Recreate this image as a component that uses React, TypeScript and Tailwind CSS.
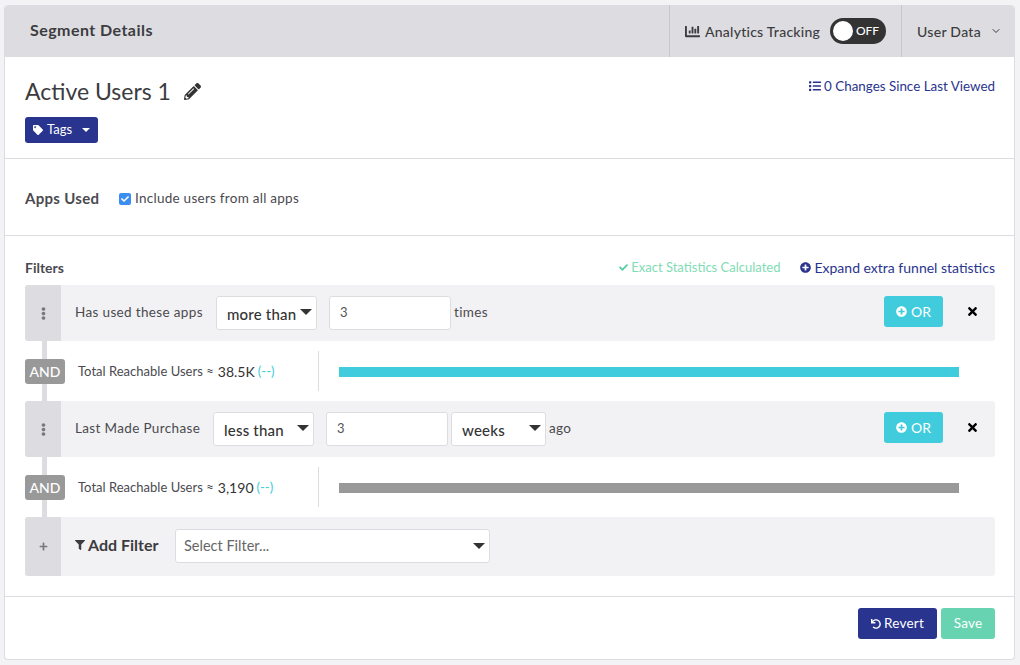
import { FC, ReactNode } from 'react';
import { ChevronDown } from 'lucide-react';
import {
  FaChartBar,
  FaCheck,
  FaEllipsisV,
  FaFilter,
  FaList,
  FaPencilAlt,
  FaPlus,
  FaPlusCircle,
  FaTag,
  FaTimes,
  FaUndo,
} from 'react-icons/fa';

const Caret: FC = () => (
  <span className="block w-0 h-0 border-x-[6px] border-x-transparent border-t-[6px] border-t-[#333]" />
);

const SelectBox: FC<{ label: string; width: string }> = ({ label, width }) => (
  <div
    className={`${width} h-[34px] shrink-0 flex items-center justify-between pl-[10px] pr-[3px] bg-white border border-[#dddde1] rounded-[3px]`}
  >
    <span className="text-[15px] leading-none font-medium text-[#333] pt-[3px] tracking-[0.2px]">{label}</span>
    <span className="mb-[3px] mr-[1px]"><Caret /></span>
  </div>
);

const NumberBox: FC<{ width: string }> = ({ width }) => (
  <div className={`${width} h-[34px] shrink-0 flex items-center pl-[10px] bg-white border border-[#dddde1] rounded-[3px] text-[13px] text-[#555]`}>
    3
  </div>
);

const FilterRow: FC<{ children: ReactNode }> = ({ children }) => (
  <div className="h-[56px] flex items-center bg-[#f2f2f4] rounded-[3px] overflow-hidden">
    <div className="w-[36px] h-full shrink-0 flex items-center justify-center bg-[#dddde1] text-[#77777c]">
      <FaEllipsisV size={13} />
    </div>
    <div className="flex-1 flex items-center pl-[14px] text-[13.5px] text-[#4a4a4f] tracking-[0.35px]">{children}</div>
    <button className="w-[59px] h-[31px] mr-[23px] mb-[3px] flex items-center justify-center gap-[4px] bg-[#40ccdc] rounded-[3px] text-[14px] text-white">
      <FaPlusCircle size={11} />
      OR
    </button>
    <FaTimes size={13} className="mr-[16px] mb-[3px] text-black" />
  </div>
);

const ReachRow: FC<{ value: string; barColor: string }> = ({ value, barColor }) => (
  <div className="h-[60px] flex">
    <div className="w-[40px] shrink-0 flex flex-col">
      <div className="flex-1 w-[5px] ml-[17px] bg-[#dddde1]" />
      <div className="h-[25px] flex items-center justify-center bg-[#999] rounded-[3px] text-[14px] font-medium text-white">AND</div>
      <div className="flex-1 w-[5px] ml-[17px] bg-[#dddde1]" />
    </div>
    <div className="w-[253px] shrink-0 flex items-center pl-[13px] pt-[1px] text-[13px] text-[#4a4a4f] tracking-[0.02px]">
      Total Reachable Users ≈ <span className="text-[14px] text-[#333] ml-[4px]">{value}</span>
      <span className="ml-[3px] text-[#40ccdc]">(--)</span>
    </div>
    <div className="my-[10px] w-px bg-[#dddde1]" />
    <div className="flex items-center pl-[20px] pt-[2px]">
      <div className={`w-[620px] h-[10px] ${barColor}`} />
    </div>
  </div>
);

export default function App() {
  return (
    <div className="w-[1020px] h-[665px] pt-[5px] px-[4px] bg-[#f3f3f5] font-['Lato','Liberation_Sans',sans-serif] overflow-hidden">
      <div className="w-[1011px] h-[655px] flex flex-col bg-white border-x border-b border-[#dddde1] rounded-[4px]">
        {/* Header */}
        <div className="h-[52px] shrink-0 flex items-center bg-[#dddde1] rounded-t-[4px]">
          <h2 className="flex-1 pl-[25px] text-[16px] font-bold text-[#3c3c40] tracking-[0.45px] mb-[2px]">Segment Details</h2>
          <div className="h-full w-[232px] flex items-center pl-[15px] border-l border-[#c9c9cd] text-[#3c3c40]">
            <FaChartBar size={15} className="mr-[5px]" />
            <span className="text-[14px] font-medium tracking-[0.25px]">Analytics Tracking</span>
            <div className="w-[56px] h-[26px] ml-[10px] flex items-center justify-between pl-[3px] pr-[7px] rounded-full bg-[#333]">
              <span className="w-[20px] h-[20px] rounded-full bg-white" />
              <span className="text-[12px] font-medium text-white">OFF</span>
            </div>
          </div>
          <div className="h-full w-[113px] flex items-center pl-[15px] border-l border-[#c9c9cd] text-[#3c3c40]">
            <span className="text-[14px] font-medium tracking-[0.3px]">User Data</span>
            <ChevronDown size={12} className="ml-[9px]" />
          </div>
        </div>

        {/* Title */}
        <div className="h-[102px] shrink-0 flex justify-between pl-[20px] pr-[19px] border-b border-[#dddde1]">
          <div>
            <div className="flex items-center mt-[19px] h-[30px]">
              <h1 className="text-[23px] leading-none font-normal text-[#3c3c40]">Active Users 1</h1>
              <FaPencilAlt size={17} className="ml-[13px] text-[#333]" />
            </div>
            <button className="w-[73px] h-[26px] mt-[11px] flex items-center pl-[8px] bg-[#29348e] rounded-[3px] text-[13px] text-white">
              <FaTag size={10} className="mr-[4px]" />
              Tags
              <span className="ml-[10px] w-0 h-0 border-x-[4px] border-x-transparent border-t-[4px] border-t-white" />
            </button>
          </div>
          <div className="flex items-center h-[14px] mt-[22px] text-[13.4px] text-[#29348e]">
            <FaList size={12} className="mr-[3px]" />
            0 Changes Since Last Viewed
          </div>
        </div>

        {/* Apps used */}
        <div className="h-[77px] shrink-0 flex items-center pl-[20px] pt-[3px] border-b border-[#dddde1]">
          <span className="w-[94px] text-[15px] font-bold text-[#4a4a4f] tracking-[0.3px]">Apps Used</span>
          <span className="w-[12px] h-[12px] flex items-center justify-center bg-[#3b8ef0] rounded-[2px] text-white">
            <FaCheck size={8} />
          </span>
          <span className="ml-[4px] text-[13.5px] text-[#4a4a4f] tracking-[0.26px]">Include users from all apps</span>
        </div>

        {/* Filters */}
        <div className="h-[361px] shrink-0 pl-[20px] pr-[19px] border-b border-[#dddde1]">
          <div className="h-[49px] flex items-center justify-between pt-[13px]">
            <span className="text-[14px] font-bold text-[#4a4a4f]">Filters</span>
            <div className="flex items-center text-[14px]">
              <span className="flex items-center pt-[1px] text-[#7fdcb5] mr-[20px] text-[13px]">
                <FaCheck size={9} className="mr-[3px] text-[#55cfa0]" />
                Exact Statistics Calculated
              </span>
              <span className="flex items-center text-[#29348e]">
                <FaPlusCircle size={11} className="mr-[3px]" />
                Expand extra funnel statistics
              </span>
            </div>
          </div>

          <FilterRow>
            <span className="w-[141px] mb-[2px]">Has used these apps</span>
            <SelectBox label="more than" width="w-[101px]" />
            <span className="w-[12px]" />
            <NumberBox width="w-[122px]" />
            <span className="ml-[3px] mb-[2px]">times</span>
          </FilterRow>
          <ReachRow value="38.5K" barColor="bg-[#40ccdc]" />
          <FilterRow>
            <span className="w-[138px] mb-[2px]">Last Made Purchase</span>
            <SelectBox label="less than" width="w-[101px]" />
            <span className="w-[12px]" />
            <NumberBox width="w-[122px]" />
            <span className="w-[3px]" />
            <SelectBox label="weeks" width="w-[95px]" />
            <span className="ml-[3px] mb-[2px]">ago</span>
          </FilterRow>
          <ReachRow value="3,190" barColor="bg-[#999]" />

          <div className="h-[59px] flex items-center bg-[#f2f2f4] rounded-[3px] overflow-hidden">
            <div className="w-[36px] h-full shrink-0 flex items-center justify-center bg-[#dddde1] text-[#77777c]">
              <FaPlus size={9} />
            </div>
            <div className="w-[114px] shrink-0 flex items-center pl-[14px] text-[16px] font-bold text-[#3c3c40] mb-[3px]">
              <FaFilter size={10} className="mr-[3px]" />
              Add Filter
            </div>
            <div className="w-[315px] h-[34px] flex items-center justify-between pl-[8px] pr-[3px] mb-[2px] bg-white border border-[#dddde1] rounded-[3px]">
              <span className="text-[14.5px] text-[#666]">Select Filter...</span>
              <span className="mr-[1px]"><Caret /></span>
            </div>
          </div>
        </div>

        {/* Footer */}
        <div className="flex-1 flex items-start justify-end gap-[4px] pt-[11px] pr-[19px]">
          <button className="w-[79px] h-[31px] flex items-center justify-center gap-[3px] bg-[#29348e] rounded-[3px] text-[13.5px] text-white tracking-[0.2px]">
            <FaUndo size={10} />
            Revert
          </button>
          <button className="w-[54px] h-[31px] flex items-center justify-center bg-[#67d3b0] rounded-[3px] text-[13.5px] text-white tracking-[0.2px]">
            Save
          </button>
        </div>
      </div>
    </div>
  );
}
